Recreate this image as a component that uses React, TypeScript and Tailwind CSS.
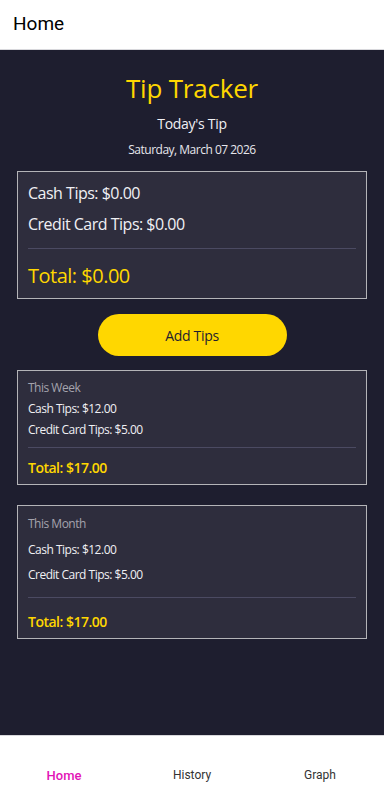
import React from 'react';

const sans = { fontFamily: '"Open Sans", "Noto Sans", sans-serif' };
const roboto = { fontFamily: 'Roboto, "Liberation Sans", sans-serif' };

function SummaryCard({ title, cash, credit, total, roomy }: { title: string; cash: string; credit: string; total: string; roomy?: boolean }) {
  return (
    <div className={`mx-[17px] border border-[#b4b4b8] bg-[#2e2d3d] px-[10px] tracking-[-0.5px] ${roomy ? 'pt-[10px] pb-[7px]' : 'pt-[9px] pb-[7px]'}`}>
      <div className="text-[12px] leading-[16px] text-[#a4a3ad]">{title}</div>
      <div className={`text-[12px] leading-[16px] text-[#f0f0f4] ${roomy ? 'mt-[10px]' : 'mt-[5px]'}`}>Cash Tips: {cash}</div>
      <div className={`text-[12px] leading-[16px] text-[#f0f0f4] ${roomy ? 'mt-[9px]' : 'mt-[5px]'}`}>Credit Card Tips: {credit}</div>
      <div className={`h-px bg-[#4b4a62] ${roomy ? 'mt-[14px]' : 'mt-[9px]'}`} />
      <div className={`text-[14px] leading-[19px] font-semibold text-[#ffd700] ${roomy ? 'mt-[14px]' : 'mt-[10px]'}`}>Total: {total}</div>
    </div>
  );
}

export default function App() {
  return (
    <div className="flex h-[792px] w-[384px] flex-col bg-white" style={sans}>
      {/* Header */}
      <div className="flex h-[50px] items-center border-b border-[#d8d8dc] bg-white px-[13px]">
        <span className="text-[19px] text-black" style={roboto}>Home</span>
      </div>

      {/* Main */}
      <div className="flex flex-1 flex-col bg-[#1e1e2f] pt-[20px]">
        <h1 className="text-center text-[26px] leading-[36px] tracking-[-0.2px] text-[#ffd700]">Tip Tracker</h1>
        <div className="mt-[8px] text-center text-[14px] leading-[19px] tracking-[-0.3px] text-[#f0f0f4]">Today's Tip</div>
        <div className="mt-[9px] text-center text-[12px] leading-[16px] tracking-[-0.5px] text-[#e6e6ec]">Saturday, March 07 2026</div>

        <div className="mx-[17px] mt-[13px] border border-[#b4b4b8] bg-[#2e2d3d] px-[10px] pt-[10px] pb-[9px] tracking-[-0.5px]">
          <div className="text-[16px] leading-[22px] text-[#f0f0f4]">Cash Tips: $0.00</div>
          <div className="mt-[9px] text-[16px] leading-[22px] text-[#f0f0f4]">Credit Card Tips: $0.00</div>
          <div className="mt-[13px] h-px bg-[#4b4a62]" />
          <div className="mt-[13px] text-[20px] leading-[27px] text-[#ffd700]">Total: $0.00</div>
        </div>

        <div className="mt-[15px] flex justify-center">
          <button className="h-[42px] w-[189px] rounded-full bg-[#ffd700] text-[14px] tracking-[-0.3px] text-[#1e1e2f]">Add Tips</button>
        </div>

        <div className="mt-[14px]">
          <SummaryCard title="This Week" cash="$12.00" credit="$5.00" total="$17.00" />
        </div>
        <div className="mt-[20px]">
          <SummaryCard title="This Month" cash="$12.00" credit="$5.00" total="$17.00" roomy />
        </div>
      </div>

      {/* Tab bar */}
      <div className="grid h-[57px] grid-cols-3 border-t border-[#d8d8dc] bg-white pt-[32px]" style={roboto}>
        <div className="text-center text-[13px] leading-[15px] font-medium text-[#e214b6]">Home</div>
        <div className="text-center text-[12px] leading-[15px] text-[#333]">History</div>
        <div className="text-center text-[12px] leading-[15px] text-[#333]">Graph</div>
      </div>
    </div>
  );
}
